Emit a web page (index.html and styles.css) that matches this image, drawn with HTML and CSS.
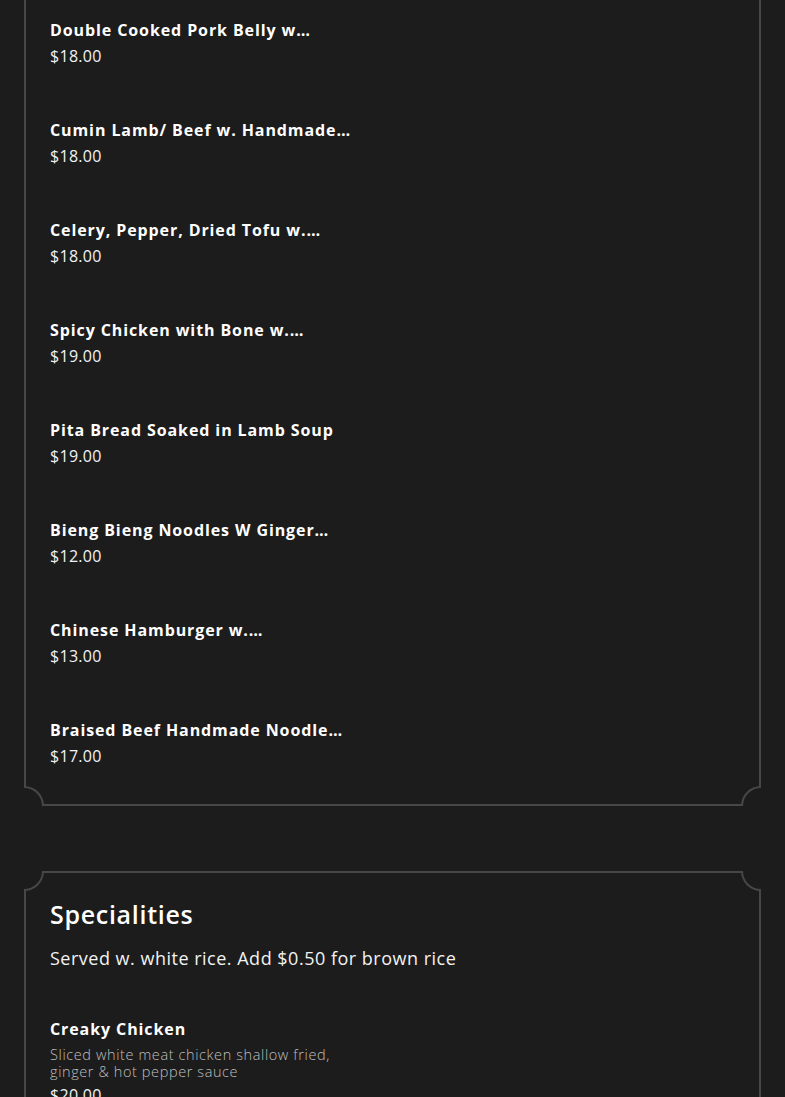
FILE: index.html
```html
<!DOCTYPE html>
<html lang="en">
<head>
<meta charset="utf-8">
<title>Menu</title>
<link rel="stylesheet" href="styles.css">
</head>
<body>
<main class="page">
  <section class="card card-first">
    <span class="notch tl"></span><span class="notch tr"></span><span class="notch bl"></span><span class="notch br"></span>
    <ul class="items">
      <li class="item"><h3 class="name">Double Cooked Pork Belly w…</h3><p class="price">$18.00</p></li>
      <li class="item"><h3 class="name">Cumin Lamb/ Beef w. Handmade…</h3><p class="price">$18.00</p></li>
      <li class="item"><h3 class="name">Celery, Pepper, Dried Tofu w.…</h3><p class="price">$18.00</p></li>
      <li class="item"><h3 class="name">Spicy Chicken with Bone w.…</h3><p class="price">$19.00</p></li>
      <li class="item"><h3 class="name">Pita Bread Soaked in Lamb Soup</h3><p class="price">$19.00</p></li>
      <li class="item"><h3 class="name">Bieng Bieng Noodles W Ginger…</h3><p class="price">$12.00</p></li>
      <li class="item"><h3 class="name">Chinese Hamburger w.…</h3><p class="price">$13.00</p></li>
      <li class="item"><h3 class="name">Braised Beef Handmade Noodle…</h3><p class="price">$17.00</p></li>
    </ul>
  </section>

  <section class="card card-second">
    <span class="notch tl"></span><span class="notch tr"></span><span class="notch bl"></span><span class="notch br"></span>
    <h2 class="title">Specialities</h2>
    <p class="subtitle">Served w. white rice. Add $0.50 for brown rice</p>
    <ul class="items">
      <li class="item"><h3 class="name">Creaky Chicken</h3><p class="desc">Sliced white meat chicken shallow fried, ginger &amp; hot pepper sauce</p><p class="price">$20.00</p></li>
      <li class="item"><h3 class="name">General Tso's Chicken</h3><p class="price">$20.00</p></li>
    </ul>
  </section>
</main>
</body>
</html>
```

FILE: styles.css
```css
* { box-sizing: border-box; }
html, body { margin: 0; padding: 0; }
body {
  background: #1c1c1c;
  color: #fff;
  font-family: "Open Sans", "Liberation Sans", sans-serif;
  height: 1097px;
  overflow: hidden;
}
.page {
  padding: 0 24px;
  display: flex;
  flex-direction: column;
  gap: 65px;
}
.card {
  position: relative;
  border: 2px solid #474747;
  background: #1c1c1c;
  padding: 0 24px 37px;
}
.card-first {
  margin-top: -33px;
  padding-top: 50px;
}
.card-second {
  padding-top: 26px;
}
.notch {
  position: absolute;
  width: 20px;
  height: 20px;
  background: #1c1c1c;
  border: 0 solid #474747;
}
.notch.tl { top: -2px; left: -2px; border-right-width: 2px; border-bottom-width: 2px; border-bottom-right-radius: 20px; }
.notch.tr { top: -2px; right: -2px; border-left-width: 2px; border-bottom-width: 2px; border-bottom-left-radius: 20px; }
.notch.bl { bottom: -2px; left: -2px; border-right-width: 2px; border-top-width: 2px; border-top-right-radius: 20px; }
.notch.br { bottom: -2px; right: -2px; border-left-width: 2px; border-top-width: 2px; border-top-left-radius: 20px; }

.items {
  list-style: none;
  margin: 0;
  padding: 0;
  display: flex;
  flex-direction: column;
  gap: 52px;
}
.item { display: flex; flex-direction: column; gap: 4px; }
.name {
  margin: 0;
  font-size: 16px;
  line-height: 22px;
  font-weight: 700;
  letter-spacing: 0.9px;
  white-space: nowrap;
}
.price {
  margin: 0;
  font-size: 16px;
  line-height: 22px;
  font-weight: 400;
  letter-spacing: 0.3px;
  color: #f2f2f2;
}
.desc {
  margin: 2px 0 0;
  max-width: 300px;
  font-size: 14.5px;
  line-height: 17px;
  font-weight: 300;
  letter-spacing: 0.6px;
  color: #bfbfbf;
}
.title {
  margin: 0;
  font-size: 25px;
  line-height: 30px;
  font-weight: 600;
  letter-spacing: 0.7px;
}
.subtitle {
  margin: 17px 0 48px;
  font-size: 18px;
  line-height: 24px;
  font-weight: 400;
  letter-spacing: 0.5px;
  color: #f2f2f2;
}
```
